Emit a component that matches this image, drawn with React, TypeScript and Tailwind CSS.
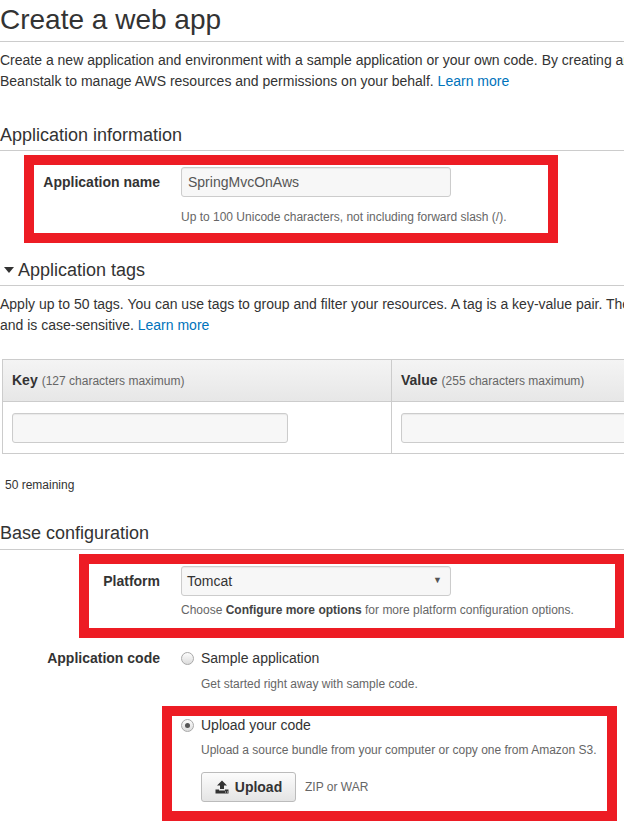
import React from "react";

const RED = "border-[10px] border-[#ed1c24]";

function Radio({ checked }: { checked?: boolean }) {
  return (
    <span className="flex h-[13px] w-[13px] shrink-0 items-center justify-center rounded-full border border-[#a9a9a9] bg-gradient-to-b from-[#fdfdfd] to-[#dcdcdc]">
      {checked && <span className="h-[5px] w-[5px] rounded-full bg-[#555]" />}
    </span>
  );
}

function UploadIcon() {
  return (
    <svg width="14" height="14" viewBox="0 0 14 14" className="fill-[#333]">
      <path d="M7 0.5 L12 5.5 L9 5.5 L9 9 L5 9 L5 5.5 L2 5.5 Z" />
      <path d="M0.5 9.5 L4 9.5 L4 10.5 L10 10.5 L10 9.5 L13.5 9.5 L13.5 13.5 L0.5 13.5 Z" />
      <rect x="10" y="11.5" width="1" height="1" fill="#ccc" />
      <rect x="12" y="11.5" width="1" height="1" fill="#ccc" />
    </svg>
  );
}

function SectionHeading({ children, className = "" }: { children: React.ReactNode; className?: string }) {
  return (
    <h2 className={`border-b border-[#ccc] text-[18px] leading-[24px] text-[#333] ${className}`}>
      {children}
    </h2>
  );
}

const inputCls =
  "h-[30px] rounded-[3px] border border-[#ccc] bg-[#f7f7f7] shadow-[inset_0_1px_1px_rgba(0,0,0,0.06)]";

export default function App() {
  return (
    <div
      className="h-[823px] w-[624px] overflow-hidden bg-white text-[#333]"
      style={{ fontFamily: '"Liberation Sans", Arial, sans-serif' }}
    >
      <h1 className="whitespace-nowrap border-b border-[#ccc] pb-[5px] pt-[4px] text-[28px] leading-[32px] text-[#333]">
        Create a web app
      </h1>

      <div className="mt-[8px] whitespace-nowrap text-[14px] leading-[21px]">
        <div>
          Create a new application and environment with a sample application or your own code. By creating an
          environment, you allow AWS Elastic
        </div>
        <div>
          Beanstalk to manage AWS resources and permissions on your behalf.{" "}
          <a className="text-[#0073bb]">Learn more</a>
        </div>
      </div>

      <SectionHeading className="mt-[31px] pb-[3px]">Application information</SectionHeading>

      {/* Application name */}
      <div className={`ml-[24px] mt-[4px] w-[534px] ${RED}`}>
        <div className="grid grid-cols-[126px_1fr] gap-x-[21px] pb-[8px] pt-[2px]">
          <div className="flex h-[30px] items-center justify-end text-[14px] font-bold">Application name</div>
          <div className={`flex w-[270px] items-center px-[6px] text-[14px] text-[#555] ${inputCls}`}>
            SpringMvcOnAws
          </div>
          <div />
          <div className="mt-[12px] text-[12px] leading-[16px] text-[#666]">
            Up to 100 Unicode characters, not including forward slash (/).
          </div>
        </div>
      </div>

      <SectionHeading className="mt-[15px] flex items-center pb-[3px]">
        <svg width="10" height="6" viewBox="0 0 10 6" className="ml-[4px] mr-[4px] fill-[#333]">
          <path d="M0 0 L10 0 L5 6 Z" />
        </svg>
        Application tags
      </SectionHeading>

      <div className="mt-[8px] whitespace-nowrap text-[14px] leading-[21px]">
        <div>
          Apply up to 50 tags. You can use tags to group and filter your resources. A tag is a key-value pair. The
          key must be unique within the resource
        </div>
        <div>
          and is case-sensitive. <a className="text-[#0073bb]">Learn more</a>
        </div>
      </div>

      {/* Tags table */}
      <div className="ml-[2px] mt-[23px] w-[780px]">
        <div className="grid h-[43px] grid-cols-[389px_1fr] border-x border-y border-[#ccc] bg-gradient-to-b from-[#f4f4f4] to-[#e7e7e7]">
          <div className="flex items-center border-r border-[#ccc] pl-[9px] text-[14px]">
            <span className="font-bold">Key</span>
            <span className="ml-[4px] text-[12px] text-[#666]">(127 characters maximum)</span>
          </div>
          <div className="flex items-center pl-[9px] text-[14px]">
            <span className="font-bold">Value</span>
            <span className="ml-[4px] text-[12px] text-[#666]">(255 characters maximum)</span>
          </div>
        </div>
        <div className="grid h-[52px] grid-cols-[389px_1fr] border-x border-b border-[#ccc]">
          <div className="flex items-center border-r border-[#ccc] pl-[9px]">
            <div className={`w-[276px] ${inputCls}`} />
          </div>
          <div className="flex items-center pl-[9px]">
            <div className={`w-[276px] ${inputCls}`} />
          </div>
        </div>
      </div>

      <div className="ml-[5px] mt-[23px] text-[12px] leading-[16px]">50 remaining</div>

      <SectionHeading className="mt-[28px] pb-[4px]">Base configuration</SectionHeading>

      {/* Platform */}
      <div className={`ml-[79px] mt-[4px] w-[546px] ${RED}`}>
        <div className="grid grid-cols-[71px_1fr] gap-x-[21px] pb-[10px] pt-[2px]">
          <div className="flex h-[30px] items-center justify-end text-[14px] font-bold">Platform</div>
          <div className={`flex w-[270px] items-center justify-between pl-[5px] pr-[8px] text-[14px] ${inputCls}`}>
            <span>Tomcat</span>
            <span className="text-[9px] text-[#555]">▼</span>
          </div>
          <div />
          <div className="mt-[6px] text-[12px] leading-[16px] text-[#666]">
            Choose <span className="font-bold text-[#444]">Configure more options</span> for more platform
            configuration options.
          </div>
        </div>
      </div>

      {/* Application code */}
      <div className="mt-[10px] grid grid-cols-[160px_1fr] gap-x-[21px]">
        <div className="flex h-[20px] items-center justify-end text-[14px] font-bold">Application code</div>
        <div>
          <div className="flex h-[20px] items-center gap-[7px] text-[14px]">
            <Radio />
            <span>Sample application</span>
          </div>
          <div className="ml-[20px] mt-[8px] text-[12px] leading-[16px] text-[#666]">
            Get started right away with sample code.
          </div>

          <div className={`-ml-[19px] mt-[14px] w-[455px] ${RED}`}>
            <div className="pb-[9px] pl-[9px]">
              <div className="flex h-[18px] items-center gap-[7px] text-[14px]">
                <Radio checked />
                <span>Upload your code</span>
              </div>
              <div className="ml-[20px] mt-[8px] whitespace-nowrap text-[12px] leading-[16px] text-[#666]">
                Upload a source bundle from your computer or copy one from Amazon S3.
              </div>
              <div className="ml-[20px] mt-[14px] flex items-center gap-[9px]">
                <button className="flex h-[30px] w-[95px] items-center justify-center gap-[6px] rounded-[3px] border border-[#bbb] bg-gradient-to-b from-[#fcfcfc] to-[#e4e4e4] text-[14px] font-bold text-[#333]">
                  <UploadIcon />
                  Upload
                </button>
                <span className="text-[12px] text-[#666]">ZIP or WAR</span>
              </div>
            </div>
          </div>
        </div>
      </div>
    </div>
  );
}
